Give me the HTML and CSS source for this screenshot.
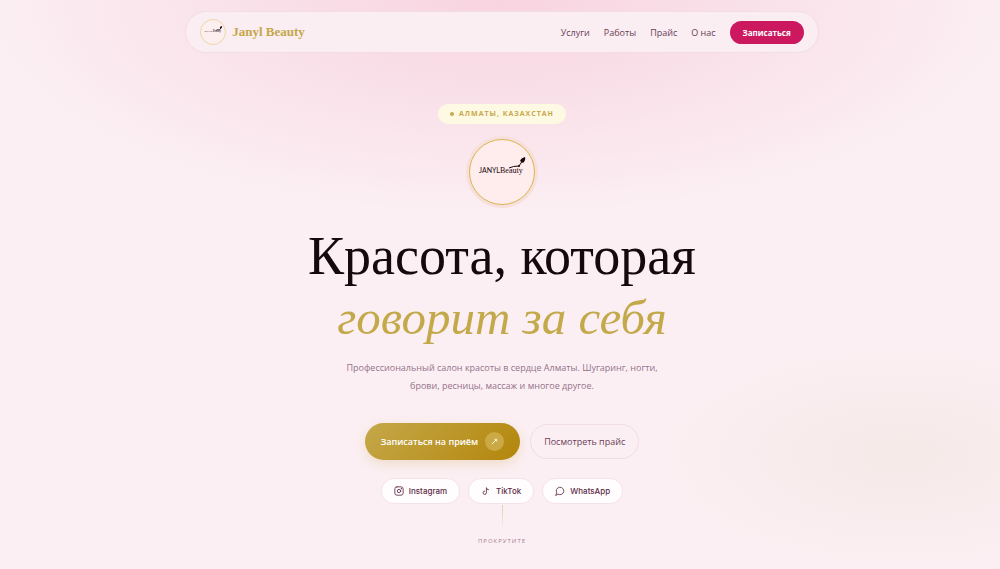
FILE: index.html
```html
<!DOCTYPE html>
<html lang="ru">
<head>
    <meta charset="UTF-8">
    <meta name="viewport" content="width=device-width, initial-scale=1.0">
    <title>Janyl Beauty</title>
    <link rel="stylesheet" href="styles.css">
</head>
<body>
    <header class="navbar">
        <a href="#" class="brand">
            <svg class="brand-logo" viewBox="0 0 64 64" aria-hidden="true">
                <text x="9" y="33" class="logo-text">JANYL</text>
                <text x="31" y="33" class="logo-text logo-text-serif">Beauty</text>
                <path d="M39 28 Q43 25 50 26 L53 21" fill="none" stroke="#17080e" stroke-width="2"/>
                <path d="M50 21 Q51 16 56 16 Q57 20 53 23 Z" fill="#17080e"/>
            </svg>
            <span class="brand-name">Janyl Beauty</span>
        </a>
        <nav class="nav-links">
            <a href="#services">Услуги</a>
            <a href="#works">Работы</a>
            <a href="#price">Прайс</a>
            <a href="#about">О нас</a>
            <a href="#booking" class="nav-cta">Записаться</a>
        </nav>
    </header>

    <main class="hero">
        <div class="badge"><span class="badge-dot"></span>Алматы, Казахстан</div>

        <svg class="hero-logo" viewBox="0 0 64 64" role="img" aria-label="Janyl Beauty">
            <text x="9" y="33" class="logo-text">JANYL</text>
            <text x="30" y="33" class="logo-text logo-text-serif">Beauty</text>
            <path d="M39 28 Q43 26 49 26 L53 20" fill="none" stroke="#17080e" stroke-width="1"/>
            <circle cx="49" cy="26" r="1" fill="#17080e"/>
            <path d="M50 21 Q51 18 55 17 Q56 20 53 23 Z" fill="#17080e"/>
        </svg>

        <h1 class="title">Красота, которая <em>говорит за себя</em></h1>
        <p class="lead">Профессиональный салон красоты в сердце Алматы. Шугаринг, ногти, брови, ресницы, массаж и многое другое.</p>

        <div class="actions">
            <a href="#booking" class="btn btn-gold">
                Записаться на приём
                <span class="btn-icon">
                    <svg viewBox="0 0 8 8" aria-hidden="true"><path d="M1 7 L6 2 M4 1.5 H6.5 V4" fill="none" stroke="#fff" stroke-width="1"/></svg>
                </span>
            </a>
            <a href="#price" class="btn btn-outline">Посмотреть прайс</a>
        </div>

        <div class="socials">
            <a href="#instagram" class="social">
                <svg viewBox="0 0 24 24" aria-hidden="true">
                    <rect x="2" y="2" width="20" height="20" rx="5"/>
                    <circle cx="12" cy="12" r="4"/>
                    <circle cx="17.5" cy="6.5" r="0.5"/>
                </svg>
                Instagram
            </a>
            <a href="#tiktok" class="social">
                <svg viewBox="0 0 24 24" aria-hidden="true">
                    <path d="M9 12a4 4 0 1 0 4 4V4a5 5 0 0 0 5 5"/>
                </svg>
                TikTok
            </a>
            <a href="#whatsapp" class="social">
                <svg viewBox="0 0 24 24" aria-hidden="true">
                    <path d="M7.9 20A9 9 0 1 0 4 16.1L2 22Z"/>
                </svg>
                WhatsApp
            </a>
        </div>

        <div class="scroll-hint">
            <span class="scroll-line"></span>
            <span>Прокрутите</span>
        </div>
    </main>
</body>
</html>
```
FILE: styles.css
```css
* {
    box-sizing: border-box;
    margin: 0;
    padding: 0;
}
body {
    min-height: 100vh;
    padding: 11px 0 0 4px;
    font-family: "Open Sans", "Noto Sans", sans-serif;
    font-size: 9px;
    color: #6b3d58;
    background:
        radial-gradient(ellipse 52% 38% at 50% 0, #f8d4e0 0%, #fbeff3 100%, transparent 100%),
        radial-gradient(ellipse 25% 20% at 90% 80%, #f5e9e8 0%, #fbeff3 100%),
        #fbeff3;
}
a {
    color: inherit;
    text-decoration: none;
}

/* Навигация */
.navbar {
    display: flex;
    align-items: center;
    justify-content: space-between;
    width: calc(64% - 4px);
    margin: 0 auto;
    padding: 7px 14px;
    border: 1px solid #f3dce2;
    border-radius: 24px;
    background: #faeef2;
}
.brand {
    display: flex;
    align-items: center;
    gap: 6px;
}
.brand-logo {
    width: 26px;
    height: 26px;
    border: 1px solid #ecd6a8;
    border-radius: 50%;
    background: #fdeef0;
}
.brand-name {
    font-family: "Liberation Serif", serif;
    font-size: 13px;
    font-weight: bold;
    color: #c5a64a;
}
.logo-text {
    font-family: "Lato", sans-serif;
    font-size: 7px;
    fill: #17080e;
}
.logo-text-serif {
    font-family: "Liberation Serif", serif;
    font-size: 8px;
}
.nav-links {
    display: flex;
    align-items: center;
    gap: 14px;
}
.nav-cta {
    padding: 5px 13px;
    border-radius: 12px;
    background: #cc185f;
    color: #fff;
    font-size: 8px;
    font-weight: bold;
    line-height: 13px;
}

/* Первый экран */
.hero {
    display: flex;
    flex-direction: column;
    align-items: center;
    padding-top: 51px;
    text-align: center;
}
.badge {
    display: flex;
    align-items: center;
    gap: 5px;
    padding: 4px 12px;
    border-radius: 10px;
    background: #fef9e3;
    color: #c9a84c;
    font-size: 7px;
    font-weight: bold;
    line-height: 12px;
    letter-spacing: 1px;
    text-transform: uppercase;
}
.badge-dot {
    width: 4px;
    height: 4px;
    border-radius: 50%;
    background: #c9a84c;
}
.hero-logo {
    width: 66px;
    height: 66px;
    margin-top: 15px;
    border: 1px solid #d9b64f;
    border-radius: 50%;
    background: #ffecec;
    box-shadow: 0 0 0 3px #f7e0dc;
}
.title {
    max-width: 460px;
    margin-top: 20px;
    font-family: "Liberation Serif", serif;
    font-size: 54px;
    font-weight: normal;
    line-height: 62px;
    color: #17080e;
}
.title em {
    display: block;
    font-size: 49px;
    color: #c4a94a;
}
.lead {
    max-width: 320px;
    margin-top: 10px;
    line-height: 18px;
    color: #94728a;
}
.actions {
    display: flex;
    align-items: center;
    gap: 10px;
    margin-top: 28px;
}
.btn {
    display: flex;
    align-items: center;
    border-radius: 20px;
}
.btn-gold {
    gap: 7px;
    padding: 9px 16px;
    background: linear-gradient(135deg, #c5a84a, #b3860b);
    box-shadow: 0 4px 12px #efdcc9;
    color: #fff;
    font-weight: 600;
}
.btn-icon {
    display: flex;
    align-items: center;
    justify-content: center;
    width: 19px;
    height: 19px;
    border-radius: 50%;
    background: #cba944;
}
.btn-icon svg {
    width: 7px;
    height: 7px;
}
.btn-outline {
    padding: 10px 13px;
    border: 1px solid #f0dce4;
    line-height: 13px;
}
.socials {
    display: flex;
    gap: 8px;
    margin-top: 18px;
}
.social {
    display: flex;
    align-items: center;
    gap: 5px;
    padding: 6px 12px;
    border: 1px solid #f6e3e8;
    border-radius: 13px;
    background: #fffdfe;
    color: #5c2a45;
    font-family: "Inter", sans-serif;
    font-size: 8px;
    font-weight: 500;
    line-height: 12px;
}
.social svg {
    width: 10px;
    height: 10px;
    fill: none;
    stroke: #5c2a45;
    stroke-width: 2;
    stroke-linecap: round;
    stroke-linejoin: round;
}
.scroll-hint {
    display: flex;
    flex-direction: column;
    align-items: center;
    gap: 8px;
    margin-top: 1px;
    color: #a77f94;
    font-size: 6px;
    letter-spacing: 1px;
    text-transform: uppercase;
}
.scroll-line {
    width: 1px;
    height: 24px;
    background: linear-gradient(#e6cda0, #fbeff3);
}
```
